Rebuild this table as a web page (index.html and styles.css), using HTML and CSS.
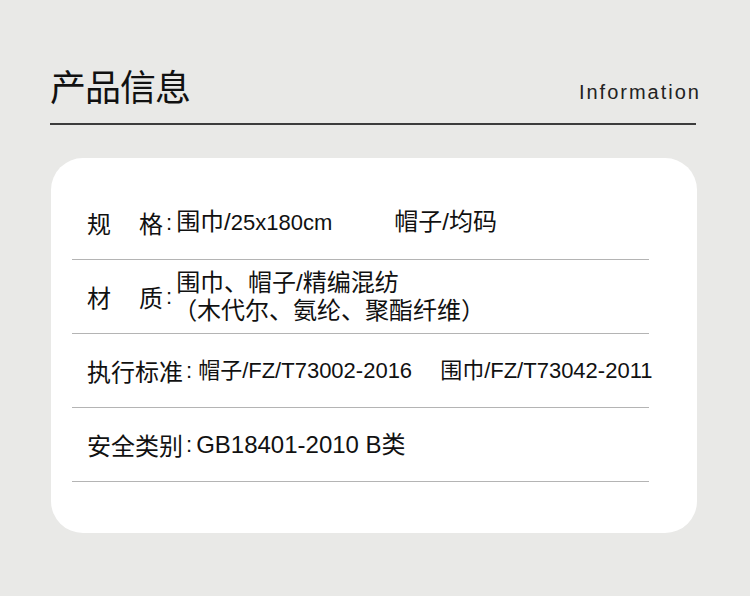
FILE: index.html
```html
<!DOCTYPE html>
<html lang="zh-CN">
<head>
    <meta charset="UTF-8">
    <meta name="viewport" content="width=device-width, initial-scale=1.0">
    <title>产品信息</title>
    <link rel="stylesheet" href="styles.css">
</head>
<body>
    <div class="page">
        <div class="header">
            <h1 class="title">产品信息</h1>
            <span class="subtitle">Information</span>
        </div>
        <div class="rule"></div>

        <div class="card">
            <div class="row">
                <span class="label label-short">规格</span><span class="colon">:</span>
                <span class="value">围巾/<span class="num">25x180cm</span><span class="gap-wide"></span>帽子/均码</span>
            </div>
            <div class="row">
                <span class="label label-short">材质</span><span class="colon">:</span>
                <span class="value value-multi">围巾、帽子/精编混纺<br><span class="paren">（木代尔、氨纶、聚酯纤维）</span></span>
            </div>
            <div class="row">
                <span class="label">执行标准</span><span class="colon">:</span>
                <span class="value value-small">帽子/FZ/T73002-2016<span class="gap"></span>围巾/FZ/T73042-2011</span>
            </div>
            <div class="row">
                <span class="label">安全类别</span><span class="colon">:</span>
                <span class="value">GB18401-2010 B类</span>
            </div>
        </div>
    </div>
</body>
</html>
```

FILE: styles.css
```css
body {
    margin: 0;
    padding: 0;
    background-color: #e9e9e7;
    font-family: "Liberation Sans", "Noto Sans CJK SC", sans-serif;
    color: #111;
}
.page {
    width: 750px;
    height: 596px;
    overflow: hidden;
}
.header {
    display: flex;
    justify-content: space-between;
    align-items: baseline;
    padding: 67px 50px 0 50px;
}
.title {
    margin: 0;
    font-family: "Noto Sans CJK SC", sans-serif;
    font-size: 36px;
    font-weight: normal;
    line-height: 36px;
    letter-spacing: -1px;
}
.subtitle {
    position: relative;
    top: -2px;
    font-size: 20px;
    letter-spacing: 2px;
    margin-right: -1px;
    color: #222;
}
.rule {
    margin: 17px 54px 0 50px;
    height: 2px;
    background-color: #3c3c3c;
}
.card {
    margin: 33px 0 0 51px;
    width: 646px;
    height: 375px;
    box-sizing: border-box;
    padding: 28px 48px 0 21px;
    background-color: #fff;
    border-radius: 32px;
}
.row {
    display: flex;
    align-items: center;
    height: 74px;
    box-sizing: border-box;
    padding-left: 15px;
    border-bottom: 1.5px solid #b4b4b4;
    font-size: 24px;
    line-height: 28px;
    white-space: nowrap;
}
.label {
    font-family: "Noto Sans CJK SC", sans-serif;
}
.label-short {
    display: inline-block;
    width: 76px;
    text-align-last: justify;
}
.colon {
    margin: 0 4px 0 3px;
    font-size: 22px;
}
.value {
    font-family: "Liberation Sans", "Noto Sans CJK SC", sans-serif;
}
.value-multi {
    line-height: 28px;
}
.paren {
    margin-left: -3px;
}
.value-small {
    font-size: 22px;
    margin-left: 2px;
}
.num {
    font-size: 22px;
}
.gap-wide {
    display: inline-block;
    width: 62px;
}
.gap {
    display: inline-block;
    width: 28px;
}
```
